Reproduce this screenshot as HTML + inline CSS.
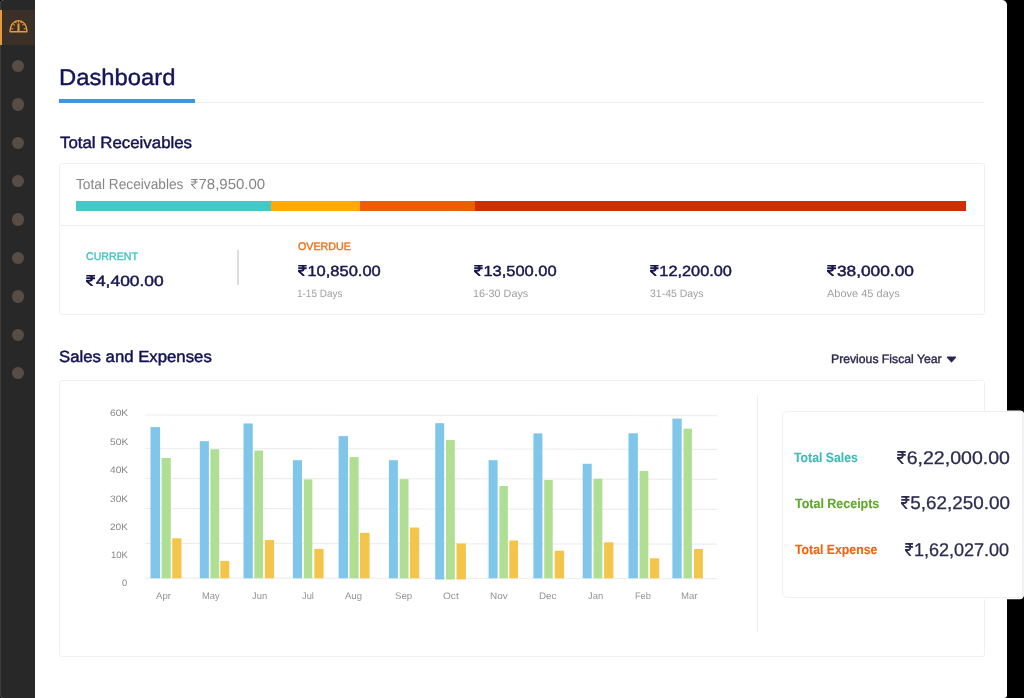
<!DOCTYPE html><html><head><meta charset="utf-8"><title>Dashboard</title><style>
*{margin:0;padding:0;box-sizing:border-box}
html,body{width:1024px;height:698px;overflow:hidden;background:#000;font-family:"Liberation Sans",sans-serif}
#app{position:absolute;left:0;top:0;width:1007.3px;height:698px;background:#fff;border-radius:4px 5px 3px 4px;overflow:hidden}
#side{position:absolute;left:0;top:0;width:35.3px;height:698px;background:#282828;border-left:1px solid #3c3c3c}
#act{position:absolute;left:-1px;top:9.7px;width:35.3px;height:35.3px;background:#3a3028}
#actbar{position:absolute;left:0;top:0;width:2.3px;height:100%;background:#e89a38}
#gauge{position:absolute;left:0px;top:0}
.dot{position:absolute;left:10.8px;width:12.4px;height:12.4px;border-radius:50%;background:#574d44}
.t{position:absolute;white-space:nowrap;line-height:1em;transform-origin:0 0;text-rendering:geometricPrecision}
.rs{display:inline-block;height:0.688em;width:0.461em;vertical-align:baseline;margin-right:0.035em;overflow:hidden}
.card{position:absolute;border:1px solid #eff0f3;border-radius:3px;background:#fff}
#uline{position:absolute;left:59px;top:99px;width:136px;height:4.2px;background:#3d97e0}
#hline{position:absolute;left:195px;top:101.8px;width:789px;height:1.2px;background:#eef0f2}
#bar{position:absolute;left:75.7px;top:201px;width:890px;height:9.8px;background:#d12d00}
#bar div{position:absolute;top:0;height:100%}
#cdiv{position:absolute;left:59.5px;top:224.8px;width:925px;height:1.2px;background:#eef0f2}
#vdiv1{position:absolute;left:237.4px;top:250px;width:1.2px;height:35px;background:#dcdcdc}
#vdiv2{position:absolute;left:756.6px;top:394.5px;width:1.2px;height:237.5px;background:#eeeeee}
#tri{position:absolute;left:940px;top:350px}
#txt{will-change:transform}
#sum{position:absolute;left:782.3px;top:411.2px;width:241px;height:186.6px;background:#fff;border:1px solid #eff0f4;border-radius:5px 3px 3px 5px;box-shadow:1px 0 0 0 #f3f3f6,0 1px 0 0.2px #fff,0 0 0 0.4px #fff}
</style></head><body><div id="app"><div id="side"><div id="act"><div id="actbar"></div><svg id="gauge" viewBox="0 0 36 36" width="36" height="36"><g transform="translate(0,-9.7)" fill="none" stroke="#e89a38"><path d="M10.1,31.4 C10.1,16.6 26.9,16.6 26.9,31.4 Z" stroke-width="1.35" stroke-linejoin="round"/><path d="M18.5,23.2 V30.8" stroke-width="2.0"/><path d="M18.5,20.6 V22.4 M11.6,28.3 L13.2,28.7 M25.4,28.3 L23.8,28.7 M13.4,23.9 L14.7,25 M23.6,23.9 L22.3,25 M15.6,21.6 L16.3,22.9 M21.4,21.6 L20.7,22.9" stroke-width="1.1"/></g></svg></div><div class="dot" style="top:59.8px"></div><div class="dot" style="top:98.2px"></div><div class="dot" style="top:136.6px"></div><div class="dot" style="top:175.0px"></div><div class="dot" style="top:213.4px"></div><div class="dot" style="top:251.8px"></div><div class="dot" style="top:290.2px"></div><div class="dot" style="top:328.6px"></div><div class="dot" style="top:367.0px"></div></div><div id="uline"></div><div id="hline"></div><div class="card" style="left:59.2px;top:163px;width:925.6px;height:151.6px"></div><div id="bar"><div style="left:0;width:195.5px;background:#47c8c8"></div><div style="left:195.5px;width:88.4px;background:#ffab00"></div><div style="left:283.9px;width:115.3px;background:#ec5f00"></div></div><div id="cdiv"></div><div id="vdiv1"></div><div class="card" style="left:59.2px;top:380px;width:925.6px;height:276.6px"></div><svg id="chart" width="1024" height="698" viewBox="0 0 1024 698" style="position:absolute;left:0;top:0"><line x1="144.8" y1="415.00" x2="717" y2="415.60" stroke="#eeeeee" stroke-width="1.2"/><line x1="144.8" y1="448.50" x2="717" y2="449.30" stroke="#eeeeee" stroke-width="1.2"/><line x1="144.8" y1="478.40" x2="717" y2="479.30" stroke="#eeeeee" stroke-width="1.2"/><line x1="144.8" y1="508.50" x2="717" y2="509.40" stroke="#eeeeee" stroke-width="1.2"/><line x1="144.8" y1="543.30" x2="717" y2="544.20" stroke="#eeeeee" stroke-width="1.2"/><line x1="144.8" y1="578.10" x2="717" y2="578.70" stroke="#eeeeee" stroke-width="1.2"/><rect x="150.5" y="427.1" width="9.6" height="151.2" fill="#7fc6ea"/><rect x="161.6" y="458.0" width="9.2" height="120.3" fill="#b0df94"/><rect x="172.2" y="538.3" width="9.3" height="40.0" fill="#f3c54a"/><rect x="199.8" y="441.2" width="9.1" height="137.1" fill="#7fc6ea"/><rect x="210.4" y="449.3" width="8.8" height="129.0" fill="#b0df94"/><rect x="220.3" y="560.9" width="9.0" height="17.4" fill="#f3c54a"/><rect x="243.5" y="423.5" width="9.3" height="154.8" fill="#7fc6ea"/><rect x="254.3" y="450.5" width="8.8" height="127.8" fill="#b0df94"/><rect x="264.8" y="540.1" width="9.3" height="38.2" fill="#f3c54a"/><rect x="292.9" y="460.2" width="9.1" height="118.1" fill="#7fc6ea"/><rect x="303.8" y="479.4" width="8.5" height="98.9" fill="#b0df94"/><rect x="314.3" y="548.9" width="9.3" height="29.4" fill="#f3c54a"/><rect x="338.6" y="436.1" width="9.4" height="142.2" fill="#7fc6ea"/><rect x="349.5" y="457.1" width="9.1" height="121.2" fill="#b0df94"/><rect x="360.0" y="532.9" width="9.6" height="45.4" fill="#f3c54a"/><rect x="388.9" y="460.2" width="9.0" height="118.1" fill="#7fc6ea"/><rect x="399.7" y="479.1" width="8.8" height="99.2" fill="#b0df94"/><rect x="409.9" y="527.5" width="9.3" height="50.8" fill="#f3c54a"/><rect x="435.2" y="423.2" width="9.0" height="156.3" fill="#7fc6ea"/><rect x="446.0" y="440.0" width="8.8" height="139.5" fill="#b0df94"/><rect x="456.5" y="543.5" width="9.4" height="36.0" fill="#f3c54a"/><rect x="488.6" y="460.2" width="9.0" height="118.1" fill="#7fc6ea"/><rect x="499.4" y="486.0" width="8.5" height="92.3" fill="#b0df94"/><rect x="509.3" y="540.5" width="8.7" height="37.8" fill="#f3c54a"/><rect x="533.4" y="433.4" width="9.0" height="144.9" fill="#7fc6ea"/><rect x="544.2" y="480.0" width="8.5" height="98.3" fill="#b0df94"/><rect x="554.7" y="550.7" width="9.4" height="27.6" fill="#f3c54a"/><rect x="582.7" y="463.8" width="9.0" height="114.5" fill="#7fc6ea"/><rect x="593.5" y="478.8" width="8.9" height="99.5" fill="#b0df94"/><rect x="604.1" y="542.3" width="9.3" height="36.0" fill="#f3c54a"/><rect x="628.5" y="433.3" width="9.4" height="145.0" fill="#7fc6ea"/><rect x="639.6" y="470.9" width="8.7" height="107.4" fill="#b0df94"/><rect x="649.9" y="558.3" width="9.3" height="20.0" fill="#f3c54a"/><rect x="672.4" y="418.6" width="9.3" height="159.7" fill="#7fc6ea"/><rect x="683.5" y="428.7" width="8.4" height="149.6" fill="#b0df94"/><rect x="694.0" y="549.0" width="8.9" height="29.3" fill="#f3c54a"/></svg><div id="vdiv2"></div><svg id="tri" width="24" height="18" viewBox="940 350 24 18"><path d="M947.7,357.3 H955.3 L951.5,361.5 Z" fill="#2a2650" stroke="#2a2650" stroke-width="1.7" stroke-linejoin="round"/></svg></div><div id="sum"></div><div id="txt"><div class="t" id="h1" style="left:59.00px;top:62px;line-height:30px;font-size:22.82px;color:#14145a;transform:scaleX(1.0438);-webkit-text-stroke:0.38px #14145a;">Dashboard</div><div class="t" id="h2a" style="left:60.40px;top:133px;line-height:21px;font-size:16.28px;color:#131352;transform:scaleX(1.0357);-webkit-text-stroke:0.45px #131352;">Total Receivables</div><div class="t" id="trl" style="left:75.90px;top:176px;line-height:19px;font-size:14.54px;color:#86868a;transform:scaleX(0.9434);">Total Receivables</div><div class="t" id="trv" style="left:191.30px;top:176px;line-height:19px;font-size:14.54px;color:#86868a;transform:scaleX(1.0333);"><svg class="rs" style="width:0.461em;height:0.688em;vertical-align:0.00px" viewBox="0 0 67 100" preserveAspectRatio="none"><path d="M2,6 H65 M2,29 H65 M2,6 H24 C50,6 50,53 24,53 H4 L46,100" fill="none" stroke="currentColor" stroke-width="10.4" stroke-linejoin="miter" stroke-miterlimit="10"/></svg>78,950.00</div><div class="t" id="cur" style="left:85.90px;top:250px;line-height:14px;font-size:11.05px;color:#3fc2c2;transform:scaleX(0.9620);-webkit-text-stroke:0.35px #3fc2c2;">CURRENT</div><div class="t" id="curv" style="left:85.90px;top:273px;line-height:19px;font-size:14.83px;color:#17174f;transform:scaleX(1.1736);-webkit-text-stroke:0.45px #17174f;"><svg class="rs" style="width:0.537em;height:0.749em;vertical-align:-0.45px" viewBox="0 0 78 100" preserveAspectRatio="none"><path d="M2,6 H76 M2,29 H76 M2,6 H28 C58,6 58,53 28,53 H4 L54,100" fill="none" stroke="currentColor" stroke-width="17.1" stroke-linejoin="miter" stroke-miterlimit="10"/></svg>4,400.00</div><div class="t" id="ovd" style="left:297.50px;top:240px;line-height:14px;font-size:11.05px;color:#ef6c15;transform:scaleX(0.9669);-webkit-text-stroke:0.35px #ef6c15;">OVERDUE</div><div class="t" id="v1" style="left:298.30px;top:263px;line-height:19px;font-size:14.68px;color:#17174f;transform:scaleX(1.1234);-webkit-text-stroke:0.45px #17174f;"><svg class="rs" style="width:0.537em;height:0.749em;vertical-align:-0.45px" viewBox="0 0 78 100" preserveAspectRatio="none"><path d="M2,6 H76 M2,29 H76 M2,6 H28 C58,6 58,53 28,53 H4 L54,100" fill="none" stroke="currentColor" stroke-width="17.2" stroke-linejoin="miter" stroke-miterlimit="10"/></svg>10,850.00</div><div class="t" id="v2" style="left:474.10px;top:263px;line-height:19px;font-size:14.68px;color:#17174f;transform:scaleX(1.1226);-webkit-text-stroke:0.45px #17174f;"><svg class="rs" style="width:0.537em;height:0.749em;vertical-align:-0.45px" viewBox="0 0 78 100" preserveAspectRatio="none"><path d="M2,6 H76 M2,29 H76 M2,6 H28 C58,6 58,53 28,53 H4 L54,100" fill="none" stroke="currentColor" stroke-width="17.2" stroke-linejoin="miter" stroke-miterlimit="10"/></svg>13,500.00</div><div class="t" id="v3" style="left:650.40px;top:263px;line-height:19px;font-size:14.68px;color:#17174f;transform:scaleX(1.1127);-webkit-text-stroke:0.45px #17174f;"><svg class="rs" style="width:0.537em;height:0.749em;vertical-align:-0.45px" viewBox="0 0 78 100" preserveAspectRatio="none"><path d="M2,6 H76 M2,29 H76 M2,6 H28 C58,6 58,53 28,53 H4 L54,100" fill="none" stroke="currentColor" stroke-width="17.2" stroke-linejoin="miter" stroke-miterlimit="10"/></svg>12,200.00</div><div class="t" id="v4" style="left:826.90px;top:263px;line-height:19px;font-size:14.68px;color:#17174f;transform:scaleX(1.1805);-webkit-text-stroke:0.45px #17174f;"><svg class="rs" style="width:0.537em;height:0.749em;vertical-align:-0.45px" viewBox="0 0 78 100" preserveAspectRatio="none"><path d="M2,6 H76 M2,29 H76 M2,6 H28 C58,6 58,53 28,53 H4 L54,100" fill="none" stroke="currentColor" stroke-width="17.2" stroke-linejoin="miter" stroke-miterlimit="10"/></svg>38,000.00</div><div class="t" id="d1" style="left:297.30px;top:287px;line-height:14px;font-size:10.61px;color:#a0a0a0;transform:scaleX(0.9407);">1-15 Days</div><div class="t" id="d2" style="left:473.10px;top:287px;line-height:14px;font-size:10.61px;color:#a0a0a0;transform:scaleX(1.0175);">16-30 Days</div><div class="t" id="d3" style="left:650.40px;top:287px;line-height:14px;font-size:10.61px;color:#a0a0a0;transform:scaleX(0.9875);">31-45 Days</div><div class="t" id="d4" style="left:826.90px;top:287px;line-height:14px;font-size:10.61px;color:#a0a0a0;transform:scaleX(1.0367);">Above 45 days</div><div class="t" id="h2b" style="left:58.90px;top:347px;line-height:21px;font-size:16.13px;color:#131352;transform:scaleX(1.0401);-webkit-text-stroke:0.45px #131352;">Sales and Expenses</div><div class="t" id="pfy" style="left:831.00px;top:351px;line-height:16px;font-size:12.21px;color:#2a2650;transform:scaleX(0.9981);-webkit-text-stroke:0.38px #2a2650;">Previous Fiscal Year</div><div class="t" id="ts" style="left:793.90px;top:449px;line-height:17px;font-size:13.37px;color:#40b9b9;transform:scaleX(0.9187);-webkit-text-stroke:0.10px #40b9b9;font-weight:bold;">Total Sales</div><div class="t" id="tsv" style="left:896.80px;top:446px;line-height:24px;font-size:18.46px;color:#2b2b50;transform:scaleX(1.0601);-webkit-text-stroke:0.28px #2b2b50;"><svg class="rs" style="width:0.461em;height:0.718em;vertical-align:-0.28px" viewBox="0 0 67 100" preserveAspectRatio="none"><path d="M2,6 H65 M2,29 H65 M2,6 H24 C50,6 50,53 24,53 H4 L46,100" fill="none" stroke="currentColor" stroke-width="13.8" stroke-linejoin="miter" stroke-miterlimit="10"/></svg>6,22,000.00</div><div class="t" id="tr" style="left:794.80px;top:495px;line-height:17px;font-size:13.37px;color:#5ea82f;transform:scaleX(0.9333);-webkit-text-stroke:0.10px #5ea82f;font-weight:bold;">Total Receipts</div><div class="t" id="trv2" style="left:900.50px;top:491px;line-height:24px;font-size:18.46px;color:#2b2b50;transform:scaleX(1.0225);-webkit-text-stroke:0.28px #2b2b50;"><svg class="rs" style="width:0.461em;height:0.718em;vertical-align:-0.28px" viewBox="0 0 67 100" preserveAspectRatio="none"><path d="M2,6 H65 M2,29 H65 M2,6 H24 C50,6 50,53 24,53 H4 L46,100" fill="none" stroke="currentColor" stroke-width="13.8" stroke-linejoin="miter" stroke-miterlimit="10"/></svg>5,62,250.00</div><div class="t" id="te" style="left:795.40px;top:541px;line-height:17px;font-size:13.37px;color:#ef6410;transform:scaleX(0.9189);-webkit-text-stroke:0.10px #ef6410;font-weight:bold;">Total Expense</div><div class="t" id="tev" style="left:905.30px;top:538px;line-height:24px;font-size:18.46px;color:#2b2b50;transform:scaleX(0.9774);-webkit-text-stroke:0.28px #2b2b50;"><svg class="rs" style="width:0.461em;height:0.718em;vertical-align:-0.28px" viewBox="0 0 67 100" preserveAspectRatio="none"><path d="M2,6 H65 M2,29 H65 M2,6 H24 C50,6 50,53 24,53 H4 L46,100" fill="none" stroke="currentColor" stroke-width="13.8" stroke-linejoin="miter" stroke-miterlimit="10"/></svg>1,62,027.00</div><div class="t" id="y0" style="left:109.50px;top:407px;line-height:12px;font-size:9.30px;color:#888888;transform:scaleX(1.0988);">60K</div><div class="t" id="y1" style="left:109.50px;top:436px;line-height:12px;font-size:9.30px;color:#888888;transform:scaleX(1.1037);">50K</div><div class="t" id="y2" style="left:109.50px;top:464px;line-height:12px;font-size:9.30px;color:#888888;transform:scaleX(1.0967);">40K</div><div class="t" id="y3" style="left:109.50px;top:493px;line-height:12px;font-size:9.30px;color:#888888;transform:scaleX(1.0937);">30K</div><div class="t" id="y4" style="left:109.50px;top:521px;line-height:12px;font-size:9.30px;color:#888888;transform:scaleX(1.0875);">20K</div><div class="t" id="y5" style="left:110.70px;top:549px;line-height:12px;font-size:9.30px;color:#888888;transform:scaleX(1.0247);">10K</div><div class="t" id="y6" style="left:121.90px;top:577px;line-height:12px;font-size:9.30px;color:#888888;transform:scaleX(1.0000);">0</div><div class="t" id="x0" style="left:155.95px;top:591px;line-height:12px;font-size:9.45px;color:#939393;transform:scaleX(1.0162);">Apr</div><div class="t" id="x1" style="left:202.30px;top:591px;line-height:12px;font-size:9.45px;color:#939393;transform:scaleX(0.9868);">May</div><div class="t" id="x2" style="left:252.30px;top:591px;line-height:12px;font-size:9.45px;color:#939393;transform:scaleX(0.9912);">Jun</div><div class="t" id="x3" style="left:301.50px;top:591px;line-height:12px;font-size:9.45px;color:#939393;transform:scaleX(0.9851);">Jul</div><div class="t" id="x4" style="left:344.55px;top:591px;line-height:12px;font-size:9.45px;color:#939393;transform:scaleX(1.0095);">Aug</div><div class="t" id="x5" style="left:395.30px;top:591px;line-height:12px;font-size:9.45px;color:#939393;transform:scaleX(1.0268);">Sep</div><div class="t" id="x6" style="left:442.60px;top:591px;line-height:12px;font-size:9.45px;color:#939393;transform:scaleX(1.0689);">Oct</div><div class="t" id="x7" style="left:489.75px;top:591px;line-height:12px;font-size:9.45px;color:#939393;transform:scaleX(1.0487);">Nov</div><div class="t" id="x8" style="left:538.50px;top:591px;line-height:12px;font-size:9.45px;color:#939393;transform:scaleX(1.0434);">Dec</div><div class="t" id="x9" style="left:588.30px;top:591px;line-height:12px;font-size:9.45px;color:#939393;transform:scaleX(0.9912);">Jan</div><div class="t" id="x10" style="left:635.00px;top:591px;line-height:12px;font-size:9.45px;color:#939393;transform:scaleX(0.9755);">Feb</div><div class="t" id="x11" style="left:680.85px;top:591px;line-height:12px;font-size:9.45px;color:#939393;transform:scaleX(1.0152);">Mar</div></div></body></html>
